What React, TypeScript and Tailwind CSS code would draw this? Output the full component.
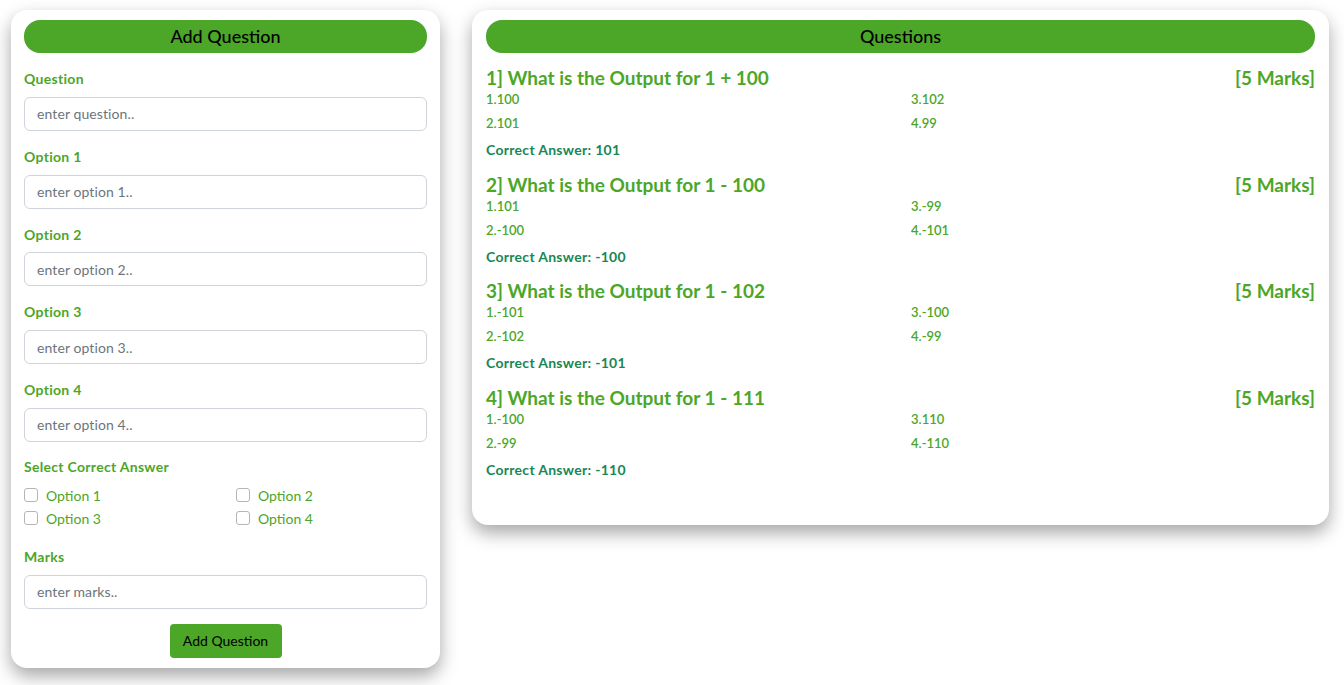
import { useState } from "react";

type Question = {
  title: string;
  options: string[];
  answer: string;
  marks: number;
};

const questions: Question[] = [
  { title: "What is the Output for 1 + 100", options: ["100", "101", "102", "99"], answer: "101", marks: 5 },
  { title: "What is the Output for 1 - 100", options: ["101", "-100", "-99", "-101"], answer: "-100", marks: 5 },
  { title: "What is the Output for 1 - 102", options: ["-101", "-102", "-100", "-99"], answer: "-101", marks: 5 },
  { title: "What is the Output for 1 - 111", options: ["-100", "-99", "110", "-110"], answer: "-110", marks: 5 },
];

const fields = [
  { label: "Question", placeholder: "enter question.." },
  { label: "Option 1", placeholder: "enter option 1.." },
  { label: "Option 2", placeholder: "enter option 2.." },
  { label: "Option 3", placeholder: "enter option 3.." },
  { label: "Option 4", placeholder: "enter option 4.." },
];

function Field({ label, placeholder, className = "mt-4" }: { label: string; placeholder: string; className?: string }) {
  return (
    <div className={`flex flex-col gap-[7.75px] ${className}`}>
      <label className="text-[14px] leading-5 font-bold tracking-[0.3px] text-[#4ca628]">{label}</label>
      <input
        type="text"
        placeholder={placeholder}
        className="h-[34px] w-full rounded-[6px] border border-[#ced4da] bg-white px-3 text-[14px] tracking-[0.1px] text-[#212529] outline-none placeholder:text-[#6c757d]"
      />
    </div>
  );
}

function Checkbox({ label }: { label: string }) {
  const [checked, setChecked] = useState(false);
  return (
    <label className="flex h-[23px] cursor-pointer items-center gap-2 text-[14px] text-[#4ca628]">
      <input
        type="checkbox"
        checked={checked}
        onChange={() => setChecked(!checked)}
        className="h-[14px] w-[14px] appearance-none rounded-[3px] border border-[#b5b5b5] bg-white checked:bg-[#4ca628]"
      />
      {label}
    </label>
  );
}

export default function App() {
  return (
    <div className="flex min-h-[685px] items-start gap-8 bg-white pt-[10px] pl-[11px] pr-[15px] font-['Lato',sans-serif]">
      <div className="w-[429px] shrink-0 rounded-2xl bg-white px-[13px] pt-[10px] pb-[10px] shadow-[0_8px_18px_rgba(0,0,0,0.35)]">
        <div className="flex h-[33px] items-center justify-center rounded-[16px] bg-[#4ca628] text-[18px] font-medium text-black">
          Add Question
        </div>
        {fields.map((f) => (
          <Field key={f.label} label={f.label} placeholder={f.placeholder} />
        ))}
        <div className="mt-[15px]">
          <div className="text-[14px] leading-5 font-bold tracking-[0.3px] text-[#4ca628]">Select Correct Answer</div>
          <div className="mt-[7px] grid grid-cols-[212px_1fr]">
            <Checkbox label="Option 1" />
            <Checkbox label="Option 2" />
            <Checkbox label="Option 3" />
            <Checkbox label="Option 4" />
          </div>
        </div>
        <Field label="Marks" placeholder="enter marks.." className="mt-[17px]" />
        <div className="mt-[15px] flex justify-center">
          <button
            type="button"
            className="h-[34px] w-[112px] rounded-[4px] bg-[#4ca628] text-[14px] text-black"
          >
            Add Question
          </button>
        </div>
      </div>

      <div className="flex-1 rounded-2xl bg-white px-[14px] pt-[10px] pb-[45px] shadow-[0_8px_18px_rgba(0,0,0,0.35)]">
        <div className="flex h-[33px] items-center justify-center rounded-[16px] bg-[#4ca628] text-[18px] font-medium text-black">
          Questions
        </div>
        <div className="mt-[14px] flex flex-col gap-[13.7px]">
          {questions.map((q, i) => (
            <div key={q.title}>
              <div className="flex items-center justify-between text-[19px] leading-[22px] font-bold text-[#4ca628]">
                <span>
                  {i + 1}] {q.title}
                </span>
                <span>[{q.marks} Marks]</span>
              </div>
              <div className="grid grid-flow-col grid-cols-[425px_1fr] grid-rows-2 gap-y-1 text-[13px] leading-5 font-semibold text-[#4ca628]">
                {q.options.map((o, j) => (
                  <div key={j}>
                    {j + 1}.{o}
                  </div>
                ))}
              </div>
              <div className="mt-[7px] text-[14px] leading-5 font-bold tracking-[0.3px] text-[#198754]">
                Correct Answer: {q.answer}
              </div>
            </div>
          ))}
        </div>
      </div>
    </div>
  );
}
